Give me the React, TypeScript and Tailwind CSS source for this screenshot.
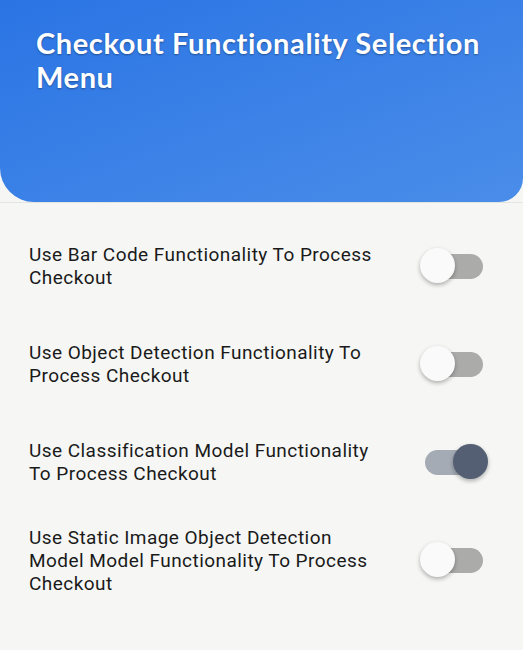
import React, { useState } from "react";

function Toggle({ on, onClick }: { on: boolean; onClick: () => void }) {
  return (
    <button
      type="button"
      onClick={onClick}
      className="relative h-[36px] w-[68px] shrink-0"
      aria-pressed={on}
    >
      <span
        className={`absolute left-[5px] top-[6px] h-[25px] w-[58px] rounded-full ${
          on ? "bg-[#a4abb5]" : "bg-[#abacaa]"
        }`}
      />
      <span
        className={`absolute top-0 h-[35px] w-[35px] rounded-full shadow-[0_2px_4px_rgba(0,0,0,0.3)] ${
          on ? "right-0 bg-[#545f74]" : "left-0 bg-[#fafafa]"
        }`}
      />
    </button>
  );
}

export default function App() {
  const [items, setItems] = useState([
    { label: "Use Bar Code Functionality To Process Checkout", on: false },
    { label: "Use Object Detection Functionality To Process Checkout", on: false },
    { label: "Use Classification Model Functionality To Process Checkout", on: true },
    { label: "Use Static Image Object Detection Model Model Functionality To Process Checkout", on: false },
  ]);
  return (
    <div className="min-h-[650px] w-full bg-[#f6f7f5]">
      <div className="h-[202px] rounded-bl-[34px] rounded-br-[24px] bg-gradient-to-br from-[#2a74e4] to-[#4a8de9] pl-[36px] pr-[16px] pt-[26px]">
        <h1 className="text-[29px] font-bold leading-[34px] tracking-[0.6px] text-white [font-family:Lato,'Open_Sans',sans-serif] [text-shadow:0_1px_2px_rgba(0,0,0,0.35)]">
          Checkout Functionality Selection Menu
        </h1>
      </div>
      <div className="h-px bg-[#e3e5e2]" />
      <div className="flex flex-col gap-[28px] pt-[28px] [font-family:Roboto,sans-serif]">
        {items.map((it, i) => (
          <div key={i} className="flex h-[70px] items-center justify-between pl-[29px] pr-[35px]">
            <div className="w-[362px] text-[19px] leading-[23px] tracking-[0.45px] text-[#1a1a1a]">{it.label}</div>
            <Toggle
              on={it.on}
              onClick={() =>
                setItems(items.map((x, j) => (j === i ? { ...x, on: !x.on } : x)))
              }
            />
          </div>
        ))}
      </div>
    </div>
  );
}
